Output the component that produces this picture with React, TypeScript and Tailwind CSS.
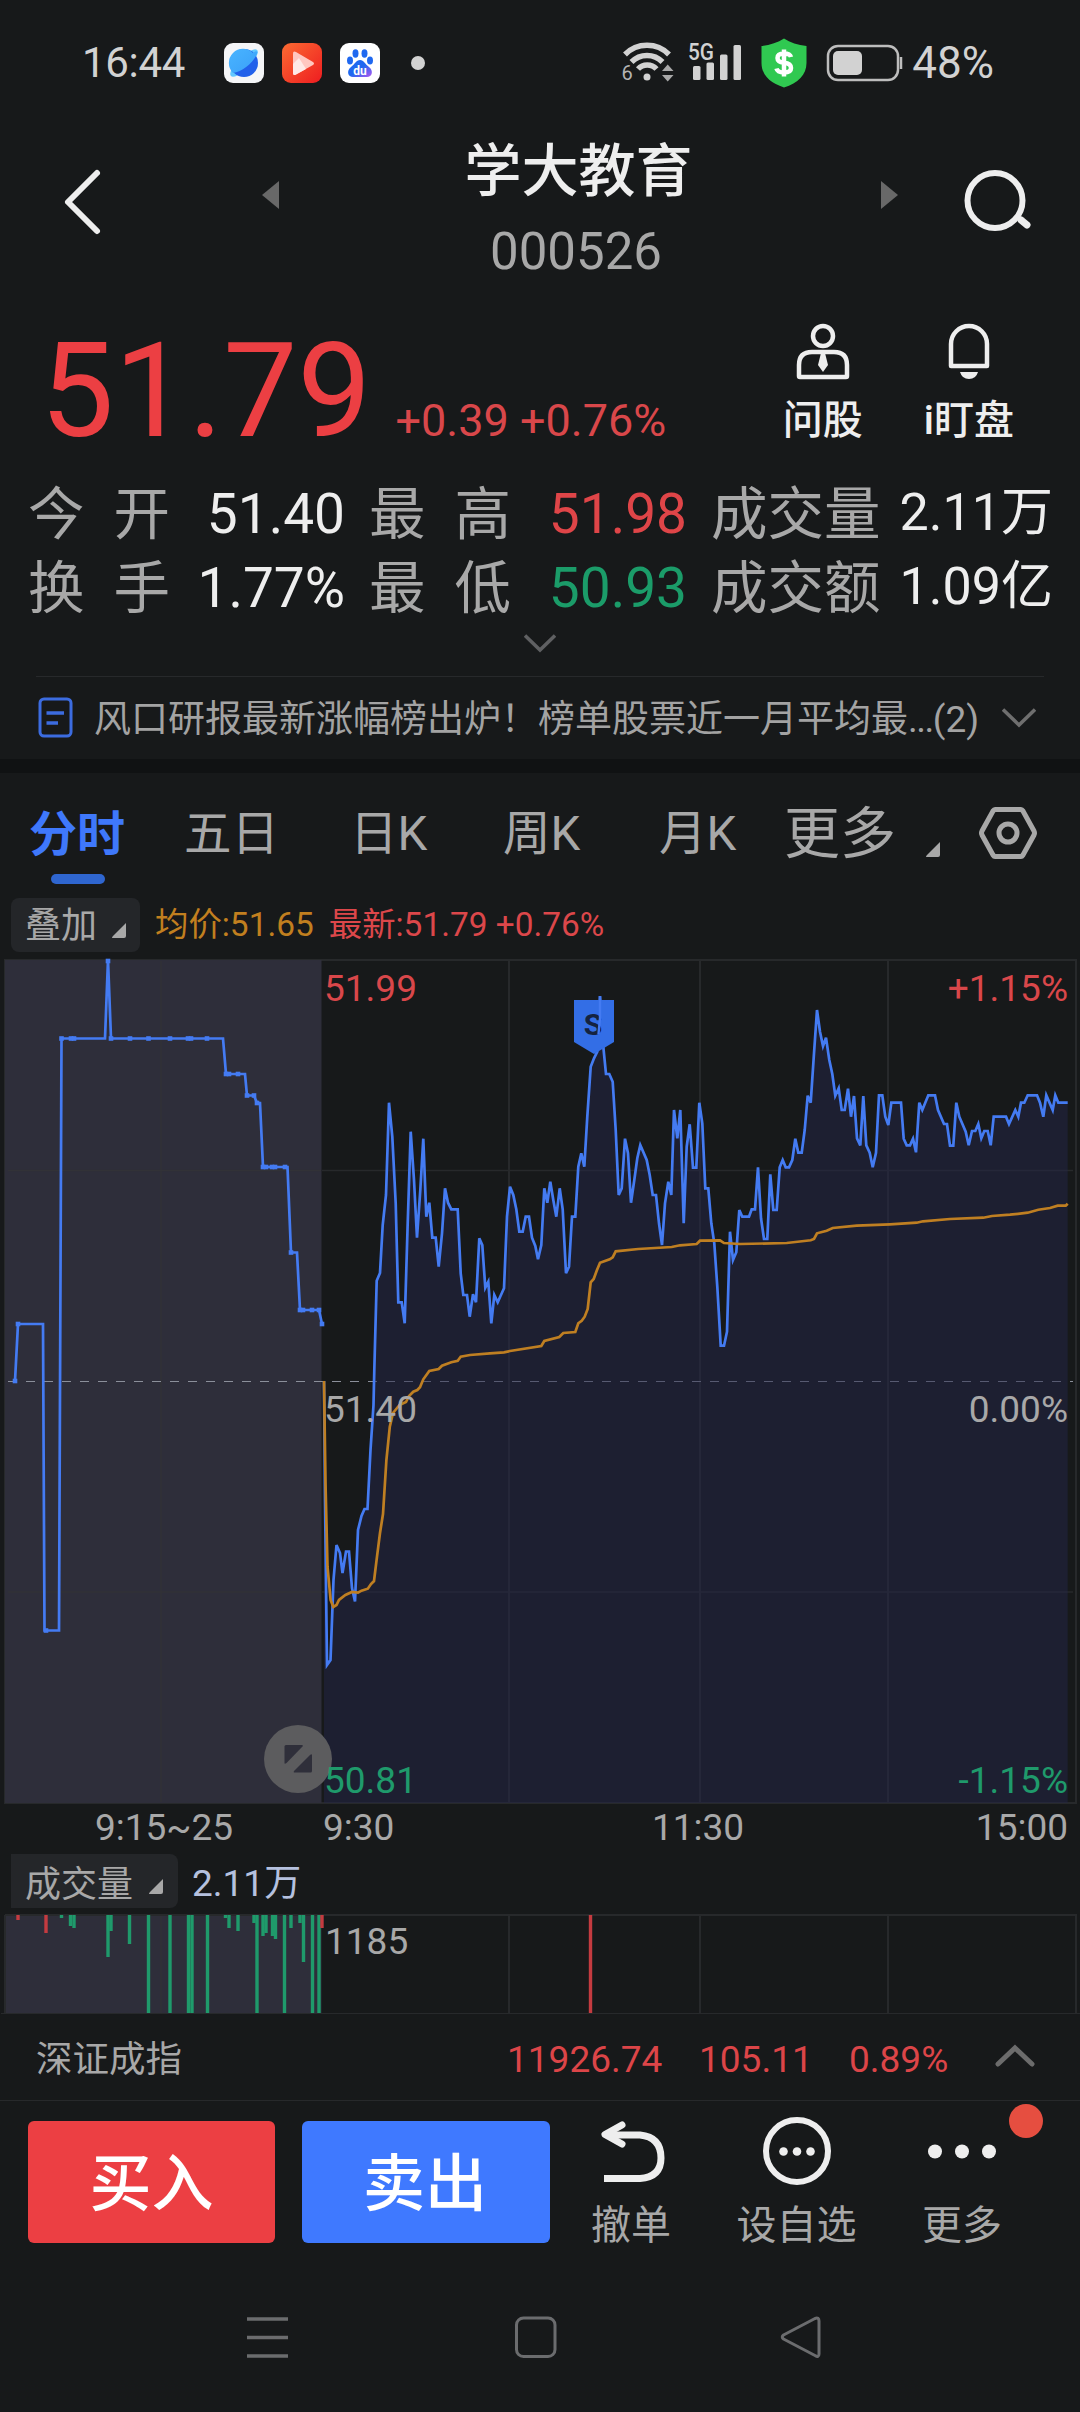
import React from 'react';

const PRICE_POINTS =
  '324,1381 325,1500 327,1665 330.5,1660 333.5,1580 336.5,1545 340,1553 342.5,1573 346,1551.5 349,1551.5 352,1588 355,1601.5 358,1530 361.5,1516 364.5,1509 367.5,1509 370.5,1450 373.5,1405 374.3,1370 376.7,1280.7 380,1273 382.7,1225 386,1195 389,1102.7 392.3,1136.7 395.7,1203.3 398.3,1302.3 401.7,1302.3 404.7,1323.3 407.7,1223.3 410.7,1131.7 414,1180 417,1237.7 420.3,1190 423.3,1138.7 426.3,1216.7 429.3,1202.7 432.3,1237.7 435.7,1237.7 438.7,1266.7 442,1233.3 445,1188.3 448,1202.7 451.3,1209.3 457.7,1209.3 460.7,1273.3 463.3,1295 467,1295 469.7,1316.7 473,1294.3 476,1302.3 479.3,1238.3 482.3,1245 485.3,1287.7 488.3,1281.7 491.3,1323.3 494.3,1295 497.7,1302.3 504,1288.3 507,1216.7 510,1186.7 513.3,1195 516.3,1209.3 519.3,1231.7 522.7,1231.7 525.7,1216.7 529,1216.7 532,1237.7 535.3,1246 538,1259.3 541.3,1245 544.3,1188.3 547.3,1202.7 550.3,1181.7 553.3,1200 556.3,1216.7 559.7,1188.3 562.7,1209.3 566,1273.3 569,1266.7 572,1216.7 575.3,1216.7 578.3,1166.7 581.3,1153.3 584.3,1166.7 587.3,1116.7 590.7,1066.7 594,1058.3 597.3,1051.7 600,996 603.3,1046.7 606,1074 609.3,1074 612.7,1081.7 615.7,1130 618.7,1195 621.7,1188.3 625,1138.7 628,1153.3 631,1202.7 634.3,1180 637.3,1158.3 640.3,1145 646.7,1160 649.7,1175 652.7,1195 656,1195 659,1223.3 662,1245 665,1203.3 668.3,1181.7 671.3,1195 674,1110 677.3,1138.3 680.3,1110 683.7,1223.3 686.7,1146.7 689.7,1124.3 693,1167.7 696.3,1167.7 699.3,1102.7 702.3,1123.3 705.3,1188.3 708.3,1188.3 711.3,1223.3 714.3,1243.3 717.3,1286.7 720.7,1345.7 724,1345.7 727,1331.7 730,1231.7 733,1260 736.3,1252.3 739.3,1210 742.3,1216.7 749,1216.7 751.7,1209.3 755,1209.3 758,1167.3 761,1218.3 764,1239 767.3,1239 770.3,1174.3 773.3,1210 776.7,1210 779.7,1167.3 782.7,1160 785.7,1167.3 789,1167.3 792.3,1160 795.3,1138.7 798.3,1152.7 801.7,1152.7 804.7,1130 807.7,1095.7 810.7,1102.7 814,1053.3 817,1010 820,1031.7 823,1046 826,1037.7 829.3,1060 832.3,1074 835.3,1095.7 838.7,1088.3 841.7,1110 844.7,1110 848,1088.7 851,1116.7 854,1096 857,1138.3 860.3,1145.3 863.3,1096 866.3,1145.3 869.7,1152.7 872.7,1167.3 876,1152.7 879,1095.3 882.3,1095.3 885.3,1116.7 888.3,1125 891.3,1102.7 901,1102.7 903.7,1138.7 906.7,1145.3 910,1145.3 913,1138.7 916,1152.3 919.3,1102.7 922.3,1110 928.3,1095.3 935,1095.3 938,1110 944,1124 947,1124 950,1145.7 953.3,1145.7 956.3,1102.7 959.3,1116.7 965.7,1131.7 968.7,1145.3 972,1131 975.3,1131 978.3,1124 981.3,1138.3 984.3,1131 987.7,1131 990.7,1145.3 993.7,1116.7 1006,1116.7 1009,1124 1015.3,1110 1018.3,1116.7 1021,1102.7 1024.3,1102.7 1027.7,1095.3 1037,1095.3 1040,1102.7 1043.3,1116.7 1046.3,1095.3 1052.7,1110 1055.3,1095.3 1058.3,1102.7 1067.7,1102.7';

const AVERAGE_POINTS =
  '324,1381 325.5,1483 327.5,1566.7 330.6,1600 333.3,1607 336.5,1605 339,1600 345.4,1595 352,1592 358,1592.7 361.5,1590.7 367.8,1588.7 371,1584 374,1581 377,1556.7 380,1533 383,1514 386.4,1460 389.8,1426.7 393,1413 399.5,1405 406,1402 409,1396 413.3,1391.7 417.3,1390 420,1387.3 423.3,1379.3 429.3,1371 438.7,1369 442,1365.7 451.3,1362.3 457.7,1360.7 460.7,1356.7 470,1355 490,1353.3 504,1352.3 510,1351 541.3,1346 544.3,1341 559.3,1337 563.3,1333 575.3,1332 578.3,1323.3 581.7,1320.7 584.7,1316.7 587.7,1309 590.7,1282.3 593.7,1279 596.7,1270.7 600,1262.7 609.7,1259.3 612.7,1257.3 615.7,1251.3 638.3,1249 671.7,1247 680,1245.3 696.7,1244 700,1240.7 720,1240.3 724,1243 740,1244 786.7,1243 810.7,1240.3 814,1239 817,1233.3 826.7,1230.7 832.7,1228 856.7,1225.7 890,1224.3 916.7,1222.7 923,1221.3 950,1219 983.3,1217.7 992,1216 1010,1214.7 1027.7,1212.7 1038.3,1209.7 1050,1208 1057.7,1205.7 1065.7,1205.7 1067.7,1203.7';

const AUCTION_POINTS =
  '15,1381 18,1324 43,1324 44.5,1630.5 59,1630.5 61.5,1038.5 105,1038.5 108,960 111,1038.5 223,1038.5 226,1074 245,1074 247,1095.5 254,1095.5 257,1103 260,1103 263,1167 287.5,1167 291,1252.5 297,1252.5 300,1310 319,1310 322,1324';

const AUCTION_MARKS: [number, number][] = [
  [15, 1381], [18, 1324], [46, 1630.5], [61.5, 1038.5], [71, 1038.5], [74, 1038.5], [108, 961],
  [111, 1038.5], [130, 1038.5], [148.5, 1038.5], [170, 1038.5], [188, 1038.5], [191, 1038.5], [207, 1038.5],
  [226, 1074], [229, 1074], [238, 1074], [247, 1095.5], [254, 1095.5], [257, 1103],
  [263, 1167], [266, 1167], [272, 1167], [275, 1167], [285, 1167], [291, 1252.5],
  [300, 1310], [303, 1310], [312, 1310], [319, 1310], [322, 1324],
];

const RED = '#c43b40';
const GREEN = '#1f9a6b';

// x, bar height, colour
const VOLUME_BARS: [number, number, string][] = [
  [18, 5, RED], [46, 18, RED], [61.5, 3, GREEN], [70.5, 11, GREEN], [74, 13, GREEN], [108, 42, GREEN],
  [111, 16, GREEN], [129.5, 29, GREEN], [148.5, 98, GREEN], [170, 98, GREEN], [188.5, 98, GREEN],
  [192, 98, GREEN], [207.5, 98, GREEN], [225.5, 3, GREEN], [229, 13, GREEN], [238, 16, GREEN],
  [254, 8, GREEN], [257, 98, GREEN], [263, 21, GREEN], [266, 18, GREEN], [272.5, 21, GREEN],
  [275.5, 24, GREEN], [284.5, 98, GREEN], [291, 13, GREEN], [300, 8, GREEN], [303.5, 47, GREEN],
  [312.5, 98, GREEN], [319, 98, GREEN], [322, 13, RED], [590.5, 98, RED],
];

const StatusBar: React.FC = () => (
  <div className="flex h-[125px] items-center pl-[82px] pr-[86px] text-[42px] leading-none text-[#d2d2d2]">
    <span className="w-[142px] tracking-[-0.3px]">16:44</span>
    <div className="flex items-center gap-[18px]">
      <svg width="40" height="40" viewBox="0 0 40 40">
        <defs>
          <linearGradient id="globe" x1="0" y1="0" x2="1" y2="1">
            <stop offset="0" stopColor="#49b4ff" />
            <stop offset="1" stopColor="#3aa0f8" />
          </linearGradient>
        </defs>
        <rect width="40" height="40" rx="9" fill="#f4f5f7" />
        <ellipse cx="20" cy="20" rx="18.5" ry="6" fill="#62c8ff" transform="rotate(-45 20 20)" />
        <circle cx="20" cy="20" r="14" fill="#2160ea" />
        <path d="M9 30A14 14 0 0 1 29 10Q32 7 33.500 9C32 17 19 29 9 30Z" fill="url(#globe)" />
      </svg>
      <svg width="40" height="40" viewBox="0 0 40 40">
        <defs>
          <linearGradient id="player" x1="0" y1="0" x2="1" y2="1">
            <stop offset="0" stopColor="#fb6b32" />
            <stop offset="1" stopColor="#ee1c20" />
          </linearGradient>
        </defs>
        <rect width="40" height="40" rx="9" fill="url(#player)" />
        <path d="M11 10.500Q11 7.500 14 9L31 19Q33 20.500 31 22L14 31.500Q11 33 11 30Z" fill="#ffc7c0" />
        <path d="M11 30V21L17 15L24 26L14 31.500Q11 33 11 30Z" fill="#ffe9e6" />
      </svg>
      <svg width="40" height="40" viewBox="0 0 40 40">
        <defs>
          <linearGradient id="paw" x1="0" y1="0" x2="1" y2="1">
            <stop offset=".5" stopColor="#1f68f0" />
            <stop offset="1" stopColor="#b05af0" />
          </linearGradient>
        </defs>
        <rect width="40" height="40" rx="9" fill="#fff" />
        <g fill="#1f68f0">
          <ellipse cx="15.500" cy="10.500" rx="3" ry="4.200" />
          <ellipse cx="24.500" cy="10.500" rx="3" ry="4.200" />
          <ellipse cx="10" cy="17.500" rx="3" ry="4" />
          <ellipse cx="30" cy="17.500" rx="3" ry="4" />
        </g>
        <path d="M20 17C24 17 25 21 29 24C34 28 32 34 27 34H13C8 34 6 28 11 24C15 21 16 17 20 17Z" fill="url(#paw)" />
        <text x="20" y="31.500" fontSize="12" fontWeight="700" textAnchor="middle" fill="#fff">du</text>
      </svg>
    </div>
    <div className="ml-[31px] size-[14px] rounded-full bg-[#d2d2d2]" />
    <div className="ml-auto flex items-center">
      <svg width="284" height="56" viewBox="620 34 284 56" className="mr-[7px]">
        <g fill="none" stroke="#d2d2d2" strokeWidth="5.500">
          <path d="M624 53.500A31 31 0 0 1 668 53.500" />
          <path d="M630.500 61A21.500 21.500 0 0 1 661.500 61" />
          <path d="M637 68A12.500 12.500 0 0 1 655.500 68" />
        </g>
        <circle cx="646" cy="76" r="3.500" fill="#d2d2d2" />
        <text x="620.500" y="79" fontSize="20" fill="#b4b4b4">6</text>
        <path d="M661 70L666.700 63.500L672.500 70ZM661 74L666.700 80.500L672.500 74Z" fill="#a8a8a8" />
        <text x="687" y="59" fontSize="23" fontWeight="500" textLength="26" lengthAdjust="spacingAndGlyphs" fill="#d2d2d2">5G</text>
        <g fill="#d2d2d2">
          <rect x="692" y="65" width="7.500" height="14" rx="1.500" />
          <rect x="705.500" y="61.500" width="7.500" height="17.500" rx="1.500" />
          <rect x="719" y="53.500" width="7.500" height="25.500" rx="1.500" />
          <rect x="732.500" y="44" width="7.500" height="35" rx="1.500" />
        </g>
        <path d="M783 37.500C789 41.500 797 44 805.500 45V62C805.500 74 797 82 783 86.500C769 82 760.500 74 760.500 62V45C769 44 777 41.500 783 37.500Z" fill="#30c951" />
        <path d="M790 56Q789 52.500 783 52.500Q776.500 52.500 776.500 57Q776.500 61 783 61.800Q790 62.500 790 67Q790 71.500 783 71.500Q776.500 71.500 775.500 67.500M783 48.500V75.500" fill="none" stroke="#fff" strokeWidth="4.500" />
        <rect x="827" y="45" width="70" height="34" rx="10" fill="none" stroke="#bdbdbd" strokeWidth="2.500" />
        <rect x="832" y="50" width="29" height="24" rx="5" fill="#d2d2d2" />
        <path d="M900 56V68" stroke="#bdbdbd" strokeWidth="2.500" />
      </svg>
      <span className="text-[44px]">48%</span>
    </div>
  </div>
);

const Header: React.FC = () => (
  <div className="flex h-[175px] justify-between px-[48px]">
    <div className="flex pl-[14px] pt-[42px]">
      <svg width="42" height="72" viewBox="0 0 42 72" fill="none" stroke="#eee" strokeWidth="6" strokeLinecap="round" strokeLinejoin="round">
        <path d="M35 6L6 35L35 64" />
      </svg>
      <svg width="18" height="28" viewBox="0 0 18 28" className="ml-[158px] mt-[14px]">
        <path d="M17 0V28L0 14Z" fill="#686868" />
      </svg>
    </div>
    <div className="pr-[3px] pt-[7px] text-center">
      <h1 className="text-[57px] font-medium leading-[80px] text-[#eee]">学大教育</h1>
      <p className="pr-[5px] text-[51px] leading-[80px] text-[#a8a8a8]">000526</p>
    </div>
    <div className="flex pt-[42px]">
      <svg width="18" height="28" viewBox="0 0 18 28" className="mr-[62px] mt-[14px]">
        <path d="M1 0V28L18 14Z" fill="#686868" />
      </svg>
      <svg width="72" height="68" viewBox="0 0 72 68" fill="none" stroke="#eee" strokeLinecap="round">
        <circle cx="35" cy="33.500" r="27.500" strokeWidth="6" />
        <path d="M61 53L67 58" strokeWidth="7" />
      </svg>
    </div>
  </div>
);

const Quote: React.FC = () => (
  <div className="flex h-[178px] pl-[40px] pr-[66px]">
    <div className="flex items-baseline pt-[25px]">
      <span className="text-[132px] leading-none text-[#ec3f43]">51.79</span>
      <span className="ml-[24px] text-[45px] leading-none text-[#d9474a]">+0.39 +0.76%</span>
    </div>
    <div className="ml-auto flex gap-[61px] pt-[22px] text-[40px] font-medium leading-[48px] text-[#eee]">
      <div className="flex flex-col items-center gap-[15px]">
        <svg width="56" height="60" viewBox="0 0 56 60" fill="none" stroke="#eee" strokeWidth="4.500">
          <circle cx="28" cy="14" r="10" />
          <path d="M4 54V43Q4 30 17 30H39Q52 30 52 43V54Q52 55 51 55H5Q4 55 4 54Z" />
          <path d="M26 31H30L33 43L28 50L23 43Z" fill="#eee" stroke="none" />
        </svg>
        <span>问股</span>
      </div>
      <div className="flex flex-col items-center gap-[15px]">
        <svg width="56" height="60" viewBox="0 0 56 60" fill="none" stroke="#eee" strokeWidth="4.500">
          <path d="M10 44V22A18 18 0 0 1 46 22V44Z" strokeLinejoin="round" />
          <path d="M19 50H37Q35 57 28 57Q21 57 19 50Z" fill="#eee" stroke="none" />
        </svg>
        <span>i盯盘</span>
      </div>
    </div>
  </div>
);

interface StatProps {
  label: string;
  value: string;
  valueClass: string;
}

const Stat: React.FC<StatProps> = ({ label, value, valueClass }) => (
  <div className="flex h-[74px] items-center justify-between">
    <div className={`flex justify-between text-[56.5px] text-[#a8a8a8] ${label.length === 2 ? 'w-[142px]' : ''}`}>
      {label.length === 2 ? label.split('').map((c) => <span key={c}>{c}</span>) : label}
    </div>
    <span className={valueClass}>{value}</span>
  </div>
);

const Stats: React.FC = () => (
  <div className="grid grid-cols-[317px_318px_342px] gap-x-[24px] px-[28px] leading-[74px]">
    <Stat label="今开" value="51.40" valueClass="-mt-[3px] text-[55px] text-[#eee]" />
    <Stat label="最高" value="51.98" valueClass="-mt-[3px] text-[55px] text-[#df4548]" />
    <Stat label="成交量" value="2.11万" valueClass="-mt-[5px] text-[52px] text-[#eee]" />
    <Stat label="换手" value="1.77%" valueClass="-mt-[3px] text-[55px] text-[#eee]" />
    <Stat label="最低" value="50.93" valueClass="-mt-[3px] text-[55px] text-[#1b9c69]" />
    <Stat label="成交额" value="1.09亿" valueClass="-mt-[5px] text-[52px] text-[#eee]" />
  </div>
);

const News: React.FC = () => (
  <div className="mx-[36px] flex h-[83px] items-center border-t border-[#27292b] text-[37px] leading-none text-[#a3a3a3]">
    <svg width="38" height="44" viewBox="0 0 38 44" fill="none" stroke="#3c6ce0" strokeWidth="3" className="shrink-0">
      <rect x="4" y="3" width="31" height="37" rx="4" />
      <path d="M10.500 17H28M10.500 27H22" strokeWidth="3.500" />
    </svg>
    <span className="ml-[20px] mt-[2px] whitespace-nowrap">
      风口研报最新涨幅榜出炉！榜单股票近一月平均最<span className="tracking-[-1.5px]">...</span>(2)
    </span>
    <svg width="34" height="20" viewBox="0 0 34 20" className="ml-auto mr-[8px]" fill="none" stroke="#6f6f6f" strokeWidth="3.500">
      <path d="M1 1.500L17 17L33 1.500" />
    </svg>
  </div>
);

const Corner: React.FC<{ className: string }> = ({ className }) => (
  <svg width="15" height="15" viewBox="0 0 15 15" className={className}>
    <path d="M14 0V13Q14 15 12 15H1Q-1 15 1 13Z" fill="#a8a8a8" />
  </svg>
);

const Tabs: React.FC = () => (
  <div className="flex h-[125px] pl-[29px] pr-[42px] text-[47.5px] leading-[123px] text-[#a8a8a8]">
    <div className="relative w-[155px] text-[48px] font-bold text-[#3f78fb]">
      分时
      <div className="absolute bottom-[14px] left-[22px] h-[10px] w-[54px] rounded-[5px] bg-[#2f66d0]" />
    </div>
    <span className="w-[166px]">五日</span>
    <span className="w-[153px]">日K</span>
    <span className="w-[156px]">周K</span>
    <span className="w-[125px]">月K</span>
    <span className="text-[56px]">更多</span>
    <Corner className="ml-auto mr-[37px] mt-[69px]" />
    <svg width="60" height="56" viewBox="0 0 60 56" className="mt-[32px]" fill="none" stroke="#a8a8a8" strokeWidth="5">
      <path d="M17 4.500H43Q44 4.500 45 6L56 26Q57 28 56 30L45 50Q44 51.500 43 51.500H17Q16 51.500 15 50L4 30Q3 28 4 26L15 6Q16 4.500 17 4.500Z" />
      <circle cx="30" cy="28" r="9" />
    </svg>
  </div>
);

const Legend: React.FC = () => (
  <div className="flex h-[54px] items-center pl-[11px] text-[33.4px] leading-[54px]">
    <div className="flex h-[54px] w-[129px] items-center rounded-[8px] bg-[#242629] pl-[14px] text-[36px] text-[#a8a8a8]">
      <span className="mt-[2px]">叠加</span>
      <Corner className="ml-[15px] mt-[11px]" />
    </div>
    <span className="ml-[15px] text-[#c17f1f]">均价:51.65</span>
    <span className="ml-[15px] text-[#dc474a]">最新:51.79 +0.76%</span>
  </div>
);

const PriceChart: React.FC = () => (
  <svg width="1080" height="902" viewBox="0 952 1080 902" className="block" fontSize="37">
    <g fill="none" stroke="#27292b" strokeWidth="2">
      <path d="M5 960H1076V1803H5Z" />
      <path d="M509 960V1803M700 960V1803M888 960V1803" />
      <path d="M322 1170.500H1073M322 1592H1073" strokeWidth="1.500" />
    </g>
    <rect x="5" y="960" width="316.500" height="843" fill="#2e2e3a" />
    <path d="M161 961V1802M8 1170.500H321M8 1592H321" fill="none" stroke="#323237" strokeWidth="1.500" />
    <path d="M8 1381.500H1073" stroke="#8b8f9a" strokeDasharray="9 9" strokeWidth="1.200" />
    <polygon points={`${PRICE_POINTS} 1067.700,1803 324,1803`} fill="#242548" fillOpacity=".5" />
    <polyline points={PRICE_POINTS} fill="none" stroke="#447bf2" strokeWidth="2.700" />
    <polyline points={AVERAGE_POINTS} fill="none" stroke="#bf7f22" strokeWidth="2.700" />
    <polyline points={AUCTION_POINTS} fill="none" stroke="#447bf2" strokeWidth="2.700" />
    {AUCTION_MARKS.map(([x, y], i) => (
      <rect key={i} x={x - 2.3} y={y - 2.3} width="4.600" height="4.600" fill="#447bf2" />
    ))}

    {/* Sell marker */}
    <path d="M574 1000H614V1042L594 1054L574 1042Z" fill="#336ee6" />
    <text x="593" y="1035" fontSize="30" fontWeight="700" textAnchor="middle" fill="#152340">S</text>
    <path d="M600 996V1018L598.500 1034" fill="none" stroke="#447bf2" strokeWidth="2.400" />

    {/* Expand button */}
    <circle cx="298" cy="1759" r="34" fill="#5c5c5e" />
    <path d="M286 1745H302Q303.500 1745 302.500 1746.500L286.500 1763Q284.500 1764.500 284.500 1763V1746.500Q284.500 1745 286 1745Z" fill="#2f2f3a" />
    <path d="M310.500 1772.500H295Q293 1772.500 294 1771L310 1755Q312 1753.500 312 1755.500V1771Q312 1772.500 310.500 1772.500Z" fill="#2f2f3a" />

    <text x="324" y="1001" fill="#d9474a">51.99</text>
    <text x="1068" y="1001" textAnchor="end" fill="#d9474a">+1.15%</text>
    <text x="324" y="1422" fill="#a8a8a8">51.40</text>
    <text x="1068" y="1422" textAnchor="end" fill="#a8a8a8">0.00%</text>
    <text x="324" y="1793" fill="#1f9a6b">50.81</text>
    <text x="1068" y="1793" textAnchor="end" fill="#1f9a6b">-1.15%</text>
    <g fill="#a8a8a8">
      <text x="95" y="1840">9:15~25</text>
      <text x="323" y="1840">9:30</text>
      <text x="698" y="1840" textAnchor="middle">11:30</text>
      <text x="1068" y="1840" textAnchor="end">15:00</text>
    </g>
  </svg>
);

const Volume: React.FC = () => (
  <>
    <div className="flex h-[54px] items-center pl-[11px] leading-[54px]">
      <div className="flex h-[54px] w-[167px] items-center rounded-r-[8px] bg-[#242629] pl-[14px] text-[36px] text-[#a8a8a8]">
        <span className="mt-[7px]">成交量</span>
        <Corner className="ml-[16px] mt-[11px]" />
      </div>
      <span className="ml-[14px] mt-[6px] text-[37px] text-[#b5c1df]">2.11万</span>
    </div>
    <svg width="1080" height="110" viewBox="0 1908 1080 110" className="block">
      <rect x="5" y="1915" width="316.500" height="98" fill="#2e2e3a" />
      <path d="M5 1915H1076V2013M5 1915V2013M509 1915V2013M700 1915V2013M888 1915V2013" fill="none" stroke="#27292b" strokeWidth="2" />
      <path d="M161 1916V2013" stroke="#323237" strokeWidth="1.500" />
      <path d="M1 2013.500H1080" stroke="#27292b" />
      {VOLUME_BARS.map(([x, h, color]) => (
        <rect key={x} x={x - 1.7} y="1915" width="3.400" height={h} fill={color} />
      ))}
      <text x="325" y="1954" fontSize="37" fill="#a8a8a8">1185</text>
    </svg>
  </>
);

const IndexRow: React.FC = () => (
  <div className="flex h-[83px] items-center border-b border-[#27292b] pl-[36px] pr-[44px] text-[37px] leading-none text-[#dc4548]">
    <span className="mt-[2px] w-[471px] text-[36.5px] text-[#a8a8a8]">深证成指</span>
    <span className="w-[192px]">11926.74</span>
    <span className="w-[150px]">105.11</span>
    <span>0.89%</span>
    <svg width="42" height="24" viewBox="0 0 42 24" className="-mt-[6px] ml-auto" fill="none" stroke="#6c6c6c" strokeWidth="5" strokeLinecap="round">
      <path d="M4 20L21 4L38 20" />
    </svg>
  </div>
);

const ActionBar: React.FC = () => (
  <div className="flex h-[162px] pl-[28px] pt-[20px] text-[40px] leading-[48px] text-[#a8a8a8]">
    <button className="h-[122px] w-[247px] rounded-[6px] bg-[#ec3f43] pt-[5px] text-[62px] font-medium leading-[117px] text-white">买入</button>
    <button className="ml-[27px] h-[122px] w-[248px] rounded-[6px] bg-[#3f79ff] pr-[2px] pt-[5px] text-[62px] font-medium leading-[117px] text-white">卖出</button>
    <div className="ml-[41px] flex w-[80px] flex-col items-center">
      <svg width="70" height="70" viewBox="0 0 70 70" className="-mt-[4px] ml-[4px]" fill="none" stroke="#eee" strokeWidth="7" strokeLinecap="round" strokeLinejoin="round">
        <path d="M24 8L7 17.500L24 27" />
        <path d="M8 18H42Q63 20 63 41Q63 60 42 61.500H6" strokeLinecap="butt" />
      </svg>
      <span className="mt-[15px]">撤单</span>
    </div>
    <div className="ml-[65px] flex w-[121px] flex-col items-center">
      <svg width="70" height="70" viewBox="0 0 70 70" className="-mt-[4px]" fill="#eee">
        <circle cx="35" cy="34" r="31" fill="none" stroke="#eee" strokeWidth="6" />
        <circle cx="21.500" cy="34.500" r="4.300" />
        <circle cx="35" cy="34.500" r="4.300" />
        <circle cx="48.500" cy="34.500" r="4.300" />
      </svg>
      <span className="mt-[15px]">设自选</span>
    </div>
    <div className="relative ml-[65px] flex w-[80px] flex-col items-center">
      <svg width="70" height="70" viewBox="0 0 70 70" className="-mt-[4px]" fill="#eee">
        <circle cx="8" cy="34.500" r="7" />
        <circle cx="35" cy="34.500" r="7" />
        <circle cx="62" cy="34.500" r="7" />
      </svg>
      <span className="mt-[15px]">更多</span>
      <div className="absolute -right-[41px] -top-[17px] size-[34px] rounded-full bg-[#e64e40]" />
    </div>
  </div>
);

const SystemNav: React.FC = () => (
  <div className="flex h-[149px] items-center pl-[245px]">
    <svg width="44" height="44" viewBox="0 0 44 44" stroke="#6b6c6e" strokeWidth="3.500">
      <path d="M2 3H43M2 21.500H43M2 40H43" />
    </svg>
    <svg width="44" height="44" viewBox="0 0 44 44" fill="none" stroke="#6b6c6e" strokeWidth="3" className="ml-[225px]">
      <rect x="2.500" y="2" width="38.500" height="38.500" rx="7" />
    </svg>
    <svg width="44" height="44" viewBox="0 0 44 44" fill="none" stroke="#6b6c6e" strokeWidth="3" strokeLinejoin="round" className="ml-[221px]">
      <path d="M36 2.500Q40 1 40 5V38Q40 42 36 39.500L4.500 23Q2 21 4.500 19Z" />
    </svg>
  </div>
);

const App: React.FC = () => {
  return (
    <div className="h-[2412px] w-[1080px] overflow-hidden bg-[#17191a] font-[Roboto,'Noto_Sans_CJK_SC',sans-serif]" lang="zh-CN">
      <StatusBar />
      <Header />
      <Quote />
      <Stats />
      <div className="flex h-[50px] justify-center pt-[8px]">
        <svg width="32" height="20" viewBox="0 0 32 20" fill="none" stroke="#5f6062" strokeWidth="3.500">
          <path d="M1 1.500L16 16L31 1.500" />
        </svg>
      </div>
      <News />
      <div className="h-[14px] bg-[#101213]" />
      <Tabs />
      <Legend />
      <PriceChart />
      <Volume />
      <IndexRow />
      <ActionBar />
      <SystemNav />
    </div>
  );
};

export default App;
